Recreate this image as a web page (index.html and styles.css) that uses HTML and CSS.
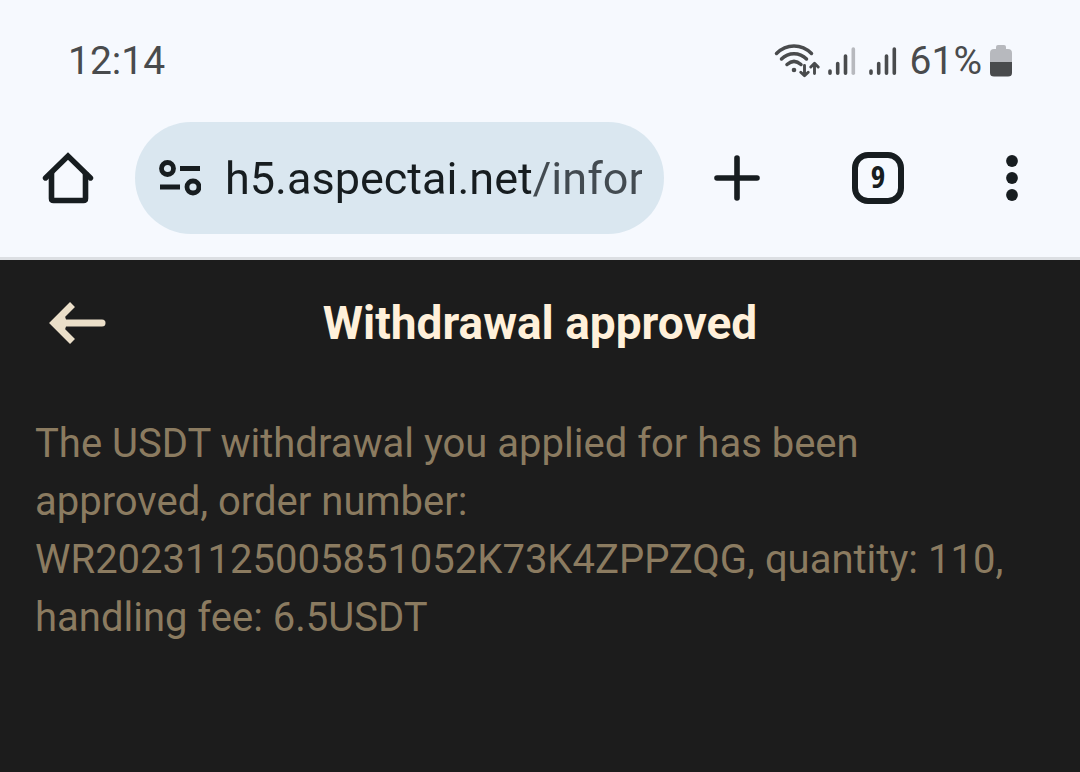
FILE: index.html
```
<!DOCTYPE html>
<html lang="en">
<head>
<meta charset="utf-8">
<meta name="viewport" content="width=device-width, initial-scale=1">
<title>Withdrawal approved</title>
<link rel="stylesheet" href="styles.css">
</head>
<body>
<div class="status-bar">
  <time class="clock">12:14</time>
  <div class="indicators">
    <svg class="wifi" width="46" height="36" viewBox="0 0 46 36" fill="none" stroke="currentColor" stroke-width="3.500" stroke-linecap="round" stroke-linejoin="round" role="img" aria-label="Wi-Fi">
      <path d="M2.500 10.500C12.500 .5 27.500 .5 37.500 10.500M7.500 16C14.500 9 25.500 9 32.500 16M13 21.500C17.500 17.500 22.500 17.500 27 21.500"/>
      <circle cx="20" cy="27" r="2.300" fill="currentColor" stroke="none"/>
      <path stroke-width="2.900" d="M30.500 22.500V32.500M26.800 29.200L30.500 32.800L34.200 29.200M40.500 30.500V20.500M36.800 24L40.500 20.300L44.200 24"/>
    </svg>
    <svg class="signal" width="28" height="32" viewBox="0 0 28 32" fill="none" stroke="currentColor" stroke-width="3.600" stroke-linecap="round" role="img" aria-label="Signal, SIM 1">
      <path d="M2 26V28.200M9.700 18.500V28.200M17.500 11V28.200"/>
      <path class="faint" d="M25.300 4V28.200"/>
    </svg>
    <svg class="signal" width="28" height="32" viewBox="0 0 28 32" fill="none" stroke="currentColor" stroke-width="3.600" stroke-linecap="round" role="img" aria-label="Signal, SIM 2">
      <path d="M2 26V28.200M9.700 18.500V28.200M17.500 11V28.200M25.300 4V28.200"/>
    </svg>
    <span class="percent">61%</span>
    <svg class="battery" width="22" height="32" viewBox="0 0 22 32" role="img" aria-label="Battery">
      <path fill="#b7b9be" d="M6 4V2Q6 0 8 0H14Q16 0 16 2V4H18Q22 4 22 8V18H0V8Q0 4 4 4Z"/>
      <path fill="currentColor" d="M0 17H22V28Q22 31.500 18 31.500H4Q0 31.500 0 28Z"/>
    </svg>
  </div>
</div>

<nav class="toolbar" aria-label="Browser">
  <button class="tool" type="button" aria-label="Home">
    <svg width="52" height="52" viewBox="0 0 52 52" fill="none" stroke="currentColor" stroke-width="5.600" stroke-linecap="round" stroke-linejoin="round">
      <path stroke-linecap="butt" d="M9.500 20V46.500Q9.500 48.500 11.500 48.500H41.500Q43.500 48.500 43.500 46.500V20"/>
      <path stroke-width="5.400" stroke-linejoin="miter" d="M3.500 26L26 4L48.500 26"/>
    </svg>
  </button>
  <form class="address">
    <button class="site-info" type="button" aria-label="Site information">
      <svg width="44" height="38" viewBox="0 0 44 38" fill="none" stroke="currentColor" stroke-width="4.800">
        <circle cx="10.500" cy="9.500" r="6"/>
        <path d="M23 9.500H43M3 28H23"/>
        <circle cx="36" cy="28" r="6"/>
      </svg>
    </button>
    <input class="url" type="text" value="h5.aspectai.net/infor" aria-label="Address" spellcheck="false">
  </form>
  <button class="tool new-tab" type="button" aria-label="New tab">
    <svg width="52" height="52" viewBox="0 0 52 52" fill="none" stroke="currentColor" stroke-width="5.600" stroke-linecap="round">
      <path d="M26 6V46M6 26H46"/>
    </svg>
  </button>
  <button class="tool tabs" type="button" aria-label="9 open tabs">9</button>
  <button class="tool menu" type="button" aria-label="Menu">
    <svg width="52" height="52" viewBox="0 0 52 52" fill="currentColor">
      <circle cx="26" cy="9" r="5.900"/><circle cx="26" cy="26" r="5.900"/><circle cx="26" cy="43" r="5.900"/>
    </svg>
  </button>
</nav>

<header class="page-header">
  <button class="back" type="button" aria-label="Back">
    <svg width="60" height="44" viewBox="0 0 60 44" fill="none" stroke="currentColor" stroke-width="7">
      <path stroke-linecap="round" d="M8 22H54"/>
      <path d="M24.500 3.500L6 22L24.500 40.500"/>
      <path fill="currentColor" stroke="none" d="M5 22L16 12L19 22L16 32Z"/>
    </svg>
  </button>
  <h1 class="title">Withdrawal approved</h1>
</header>

<main class="content">
  <p class="message">The USDT withdrawal you applied for has been approved, order number: WR20231125005851052K73K4ZPPZQG, quantity: 110, handling fee: 6.5USDT</p>
</main>
</body>
</html>
```
FILE: styles.css
```
* {
  box-sizing: border-box;
}

body {
  margin: 0;
  min-height: 100vh;
  background: #1c1c1c;
  color: #171d20;
  font-family: Roboto, "Noto Sans", sans-serif;
}

button {
  padding: 0;
  border: 0;
  background: none;
  color: inherit;
  font: inherit;
}

svg {
  display: block;
}

.status-bar {
  display: flex;
  align-items: center;
  justify-content: space-between;
  height: 122px;
  padding: 0 68px;
  background: #f6f9fe;
  color: #494b4d;
  font-size: 39px;
}

.indicators {
  display: flex;
  align-items: center;
}

.wifi {
  margin-right: 8px;
}

.signal {
  margin-right: 13px;
}

.faint {
  stroke: #b7b9be;
}

.percent {
  margin-right: 8px;
}

.toolbar {
  display: flex;
  align-items: center;
  padding: 0 42px 23px;
  border-bottom: 3px solid #dcdfe3;
  background: #f6f9fe;
}

.tool {
  flex: none;
  width: 52px;
  height: 52px;
}

.address {
  display: flex;
  flex: 1;
  align-items: center;
  min-width: 0;
  height: 112px;
  margin: 0 47px 0 41px;
  padding: 0 22px;
  border-radius: 56px;
  background: #dae7f0;
}

.site-info {
  flex: none;
  margin-right: 24px;
}

.url {
  flex: 1;
  min-width: 0;
  padding: 2px 0 0;
  border: 0;
  outline: 0;
  background: linear-gradient(to right, #171d20 309px, #434b51 309px);
  background-clip: text;
  color: transparent;
  font: 45px/60px Roboto, "Noto Sans", sans-serif;
}

.tabs {
  margin-left: 89px;
  padding-bottom: 4px;
  border: 6px solid;
  border-radius: 16px;
  font: bold 31px/36px "Open Sans", "Noto Sans", sans-serif;
  font-stretch: condensed;
}

.menu {
  margin-left: 82px;
}

.page-header {
  display: grid;
  grid-template-columns: 60px 1fr 60px;
  align-items: center;
  height: 126px;
  padding: 0 48px;
  color: #fff0da;
}

.back {
  color: #ebdfc9;
}

.title {
  margin: 0;
  font-size: 46px;
  font-weight: 700;
  line-height: 60px;
  text-align: center;
}

.content {
  padding: 29px 44px 29px 35px;
}

.message {
  margin: 0;
  color: #8b7b60;
  font-size: 40px;
  line-height: 58px;
}
```
